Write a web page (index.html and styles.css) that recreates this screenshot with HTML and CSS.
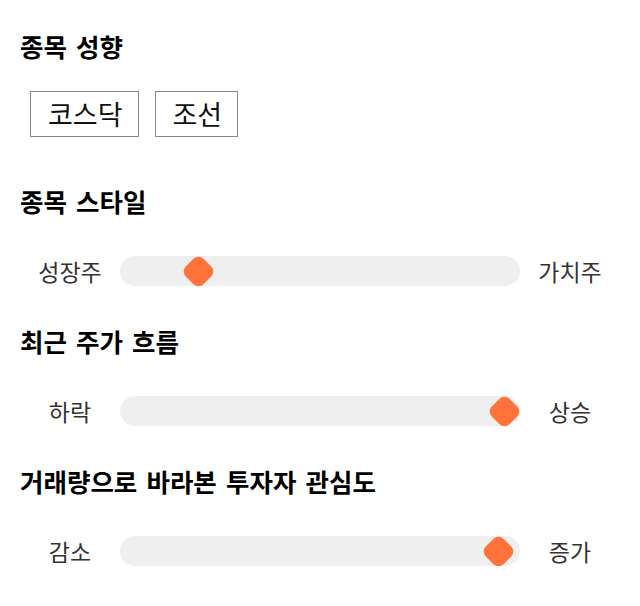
FILE: index.html
```html
<!DOCTYPE html>
<html lang="ko">
<head>
    <meta charset="UTF-8">
    <meta name="viewport" content="width=device-width, initial-scale=1.0">
    <title>종목 필터</title>
    <link rel="stylesheet" href="styles.css">
</head>
<body>
    <div class="filter">
        <section class="group group-first">
            <h2 class="group-title">종목 성향</h2>
            <div class="options">
                <button class="btn-option">코스닥</button>
                <button class="btn-option">조선</button>
            </div>
        </section>

        <section class="group">
            <h2 class="group-title">종목 스타일</h2>
            <div class="slider">
                <span class="slider-label">성장주</span>
                <div class="slider-track">
                    <span class="slider-thumb" style="left: 64px"></span>
                </div>
                <span class="slider-label">가치주</span>
            </div>
        </section>

        <section class="group">
            <h2 class="group-title">최근 주가 흐름</h2>
            <div class="slider">
                <span class="slider-label">하락</span>
                <div class="slider-track">
                    <span class="slider-thumb" style="left: 370px"></span>
                </div>
                <span class="slider-label">상승</span>
            </div>
        </section>

        <section class="group">
            <h2 class="group-title">거래량으로 바라본 투자자 관심도</h2>
            <div class="slider">
                <span class="slider-label">감소</span>
                <div class="slider-track">
                    <span class="slider-thumb" style="left: 364px"></span>
                </div>
                <span class="slider-label">증가</span>
            </div>
        </section>
    </div>
</body>
</html>
```

FILE: styles.css
```css
* {
    margin: 0;
    padding: 0;
    box-sizing: border-box;
}

body {
    font-family: "Noto Sans CJK KR", "Noto Sans", sans-serif;
    background: #fff;
    color: #000;
}

.filter {
    width: 640px;
    padding: 31px 20px 0;
}

.group {
    margin-bottom: 40px;
}

.group-first {
    margin-bottom: 49px;
}

.group-title {
    font-size: 25.5px;
    font-weight: 700;
    line-height: 30px;
    height: 30px;
    word-spacing: 2px;
    color: #000;
}

.options {
    display: flex;
    gap: 16px;
    margin-top: 30px;
    padding-left: 10px;
}

.btn-option {
    height: 46px;
    padding: 0 15px 0 17px;
    background: #fff;
    border: 1px solid #888;
    font-family: inherit;
    font-size: 27px;
    line-height: 44px;
    color: #111;
    cursor: pointer;
}

.slider {
    display: grid;
    grid-template-columns: 100px 400px 100px;
    align-items: center;
    margin-top: 40px;
    height: 30px;
}

.slider-label {
    text-align: center;
    font-size: 23px;
    line-height: 30px;
    color: #333;
}

.slider-track {
    position: relative;
    height: 30px;
    background: #efefef;
    border-radius: 15px;
}

.slider-thumb {
    position: absolute;
    top: 2.5px;
    width: 25px;
    height: 25px;
    margin-left: 2px;
    background: #ff733b;
    border-radius: 7px;
    transform: rotate(45deg);
}
```
